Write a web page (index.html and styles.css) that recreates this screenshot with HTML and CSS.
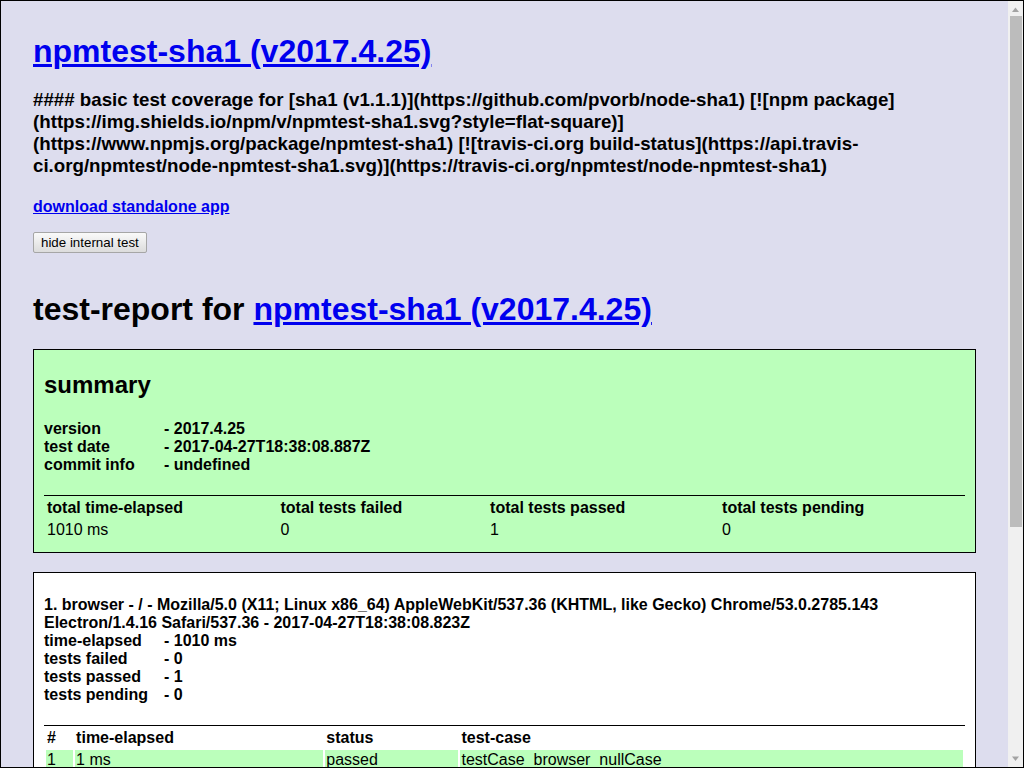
FILE: index.html
```html
<!DOCTYPE html>
<html lang="en">
<head>
<meta charset="utf-8">
<title>npmtest-sha1 (v2017.4.25)</title>
<link rel="stylesheet" href="styles.css">
</head>
<body>
<div class="window">
  <div class="page">
    <h1 class="title"><a href="#">npmtest-sha1 (v2017.4.25)</a></h1>
    <h3 class="desc">#### basic test coverage for [sha1 (v1.1.1)](https://github.com/pvorb/node-sha1) [![npm package](https://img.shields.io/npm/v/npmtest-sha1.svg?style=flat-square)](https://www.npmjs.org/package/npmtest-sha1) [![travis-ci.org build-status](https://api.travis-ci.org/npmtest/node-npmtest-sha1.svg)](https://travis-ci.org/npmtest/node-npmtest-sha1)</h3>
    <div class="download"><a href="#">download standalone app</a></div>
    <div class="controls"><button class="btn">hide internal test</button></div>

    <div class="testReportDiv">
      <h1 class="reportTitle">test-report for <a href="#">npmtest-sha1 (v2017.4.25)</a></h1>

      <div class="platform summary">
        <h2>summary</h2>
        <div class="rows">
          <div><span class="label">version</span>- 2017.4.25</div>
          <div><span class="label">test date</span>- 2017-04-27T18:38:08.887Z</div>
          <div><span class="label">commit info</span>- undefined</div>
        </div>
        <table class="report">
          <thead>
            <tr><th>total time-elapsed</th><th>total tests failed</th><th>total tests passed</th><th>total tests pending</th></tr>
          </thead>
          <tbody>
            <tr><td>1010 ms</td><td>0</td><td>1</td><td>0</td></tr>
          </tbody>
        </table>
      </div>

      <div class="platform">
        <div class="rows first">
          <div>1. browser - / - Mozilla/5.0 (X11; Linux x86_64) AppleWebKit/537.36 (KHTML, like Gecko) Chrome/53.0.2785.143 Electron/1.4.16 Safari/537.36 - 2017-04-27T18:38:08.823Z</div>
          <div><span class="label">time-elapsed</span>- 1010 ms</div>
          <div><span class="label">tests failed</span>- 0</div>
          <div><span class="label">tests passed</span>- 1</div>
          <div><span class="label">tests pending</span>- 0</div>
        </div>
        <table class="report cases">
          <thead>
            <tr><th>#</th><th>time-elapsed</th><th>status</th><th>test-case</th></tr>
          </thead>
          <tbody>
            <tr class="passed"><td>1</td><td>1 ms</td><td>passed</td><td>testCase_browser_nullCase</td></tr>
          </tbody>
        </table>
      </div>
    </div>
  </div>

  <div class="scrollbar">
    <div class="arrow"><svg width="15" height="15" viewBox="0 0 15 15"><path d="M4 11h7L7.5 6.5z" fill="#a3a3a3"/></svg></div>
    <div class="thumb"></div>
    <div class="track"></div>
    <div class="arrow"><svg width="15" height="15" viewBox="0 0 15 15"><path d="M4 4.5h7L7.5 9z" fill="#a3a3a3"/></svg></div>
  </div>
</div>
</body>
</html>
```

FILE: styles.css
```css
*,*::before,*::after {box-sizing: border-box;}
html, body {
    margin: 0;
    padding: 0;
    height: 100%;
    overflow: hidden;
}
body {
    background: #dde;
    color: #000;
    font-family: "Liberation Sans", Arial, Helvetica, sans-serif;
    font-size: 16px;
}
a {color: #00e;}

.window {
    display: flex;
    height: 768px;
    border: 1px solid #000;
}
.page {
    flex: 1;
    min-width: 0;
    overflow: hidden;
    padding: 32px 32px 0;
}

/* header */
h1 {
    font-size: 32px;
    margin: 0;
}
.title {margin-bottom: 19px;}
.desc {
    font-size: 18.72px;
    margin: 0 0 21px;
}
.download {
    font-weight: bold;
    margin-bottom: 16px;
}
.btn {
    display: block;
    height: 21px;
    padding: 0 7px;
    font-family: "Liberation Sans", Arial, sans-serif;
    font-size: 13.33px;
    color: #000;
    background: linear-gradient(#fafafa, #dcdcdc);
    border: 1px solid #a6a6a6;
    border-radius: 2px;
}

/* report */
.reportTitle {margin: 38px 0 21px;}
.platform {
    border: 1px solid #000;
    background: #fff;
    padding: 0 10px 10px;
    font-weight: bold;
    margin-bottom: 20px;
}
.summary {
    background: #bfb;
    margin-bottom: 19px;
}
.summary h2 {
    font-size: 24px;
    margin: 21px 0;
}
.rows {margin-bottom: 21px;}
.rows.first {margin: 23px 0 21px;}
.label {
    display: inline-block;
    width: 120px;
}
.report {
    width: 100%;
    border-top: 1px solid #000;
    border-spacing: 2px;
    font-size: 16px;
}
.report th, .report td {
    padding: 1px;
    text-align: left;
}
.report td {font-weight: normal;}
.passed td {background: #bfb;}

/* fake window scrollbar */
.scrollbar {
    flex: none;
    width: 15px;
    display: flex;
    flex-direction: column;
    background: #f0f0f0;
}
.arrow {height: 15px;}
.arrow svg {display: block;}
.thumb {
    height: 511px;
    margin: 0 1px 0 2px;
    background: #bcbcbc;
}
.track {flex: 1;}
```
